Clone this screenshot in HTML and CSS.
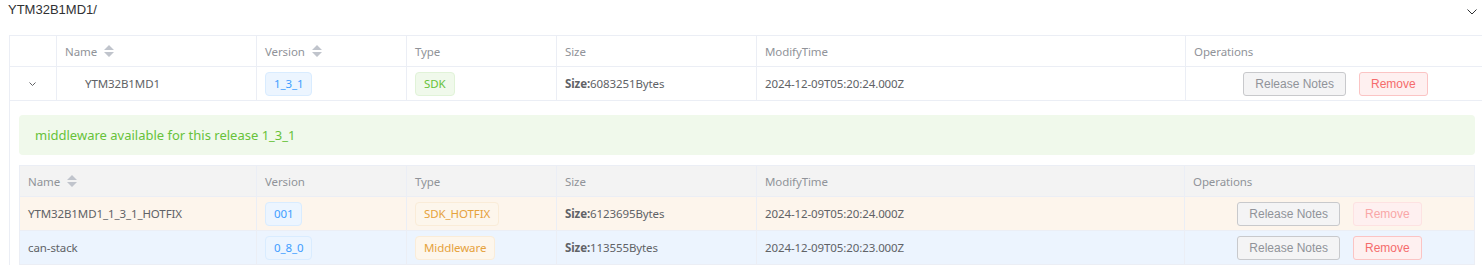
FILE: index.html
```html
<!DOCTYPE html>
<html>
<head>
<meta charset="utf-8">
<link rel="stylesheet" href="styles.css">
</head>
<body>
<div class="page">
  <div class="title-bar">
    <span class="title">YTM32B1MD1/</span>
    <svg class="title-chev" width="10" height="6" viewBox="0 0 10 6"><path d="M0.5 0.5 L5 5 L9.5 0.5" fill="none" stroke="#303133" stroke-width="1"/></svg>
  </div>
  <table class="grid outer">
    <colgroup>
      <col style="width:47px"><col style="width:200px"><col style="width:150px"><col style="width:150px"><col style="width:200px"><col style="width:429px"><col style="width:300px">
    </colgroup>
    <thead>
      <tr>
        <th></th>
        <th><span class="hcell">Name<svg class="sort" width="10" height="12" viewBox="0 0 10 12"><path d="M0 5 L5 0 L10 5 Z M0 7 L5 12 L10 7 Z" fill="#c0c4cc"/></svg></span></th>
        <th><span class="hcell">Version<svg class="sort" width="10" height="12" viewBox="0 0 10 12"><path d="M0 5 L5 0 L10 5 Z M0 7 L5 12 L10 7 Z" fill="#c0c4cc"/></svg></span></th>
        <th>Type</th>
        <th>Size</th>
        <th>ModifyTime</th>
        <th>Operations</th>
      </tr>
    </thead>
    <tbody>
      <tr>
        <td class="expand"><svg width="7" height="5" viewBox="0 0 7 5"><path d="M0.5 0.5 L3.5 3.5 L6.5 0.5" fill="none" stroke="#606266" stroke-width="1"/></svg></td>
        <td class="tree-name">YTM32B1MD1</td>
        <td><span class="tag tag-blue">1_3_1</span></td>
        <td><span class="tag tag-green">SDK</span></td>
        <td><b>Size:</b>6083251Bytes</td>
        <td>2024-12-09T05:20:24.000Z</td>
        <td class="ops"><span class="btn btn-info">Release Notes</span><span class="btn btn-danger">Remove</span></td>
      </tr>
      <tr class="expanded">
        <td colspan="7">
          <div class="alert">middleware available for this release 1_3_1</div>
          <table class="grid inner">
            <colgroup>
              <col style="width:237px"><col style="width:150px"><col style="width:150px"><col style="width:200px"><col style="width:428px"><col style="width:290px">
            </colgroup>
            <thead>
              <tr>
                <th><span class="hcell">Name<svg class="sort" width="10" height="12" viewBox="0 0 10 12"><path d="M0 5 L5 0 L10 5 Z M0 7 L5 12 L10 7 Z" fill="#c0c4cc"/></svg></span></th>
                <th>Version</th>
                <th>Type</th>
                <th>Size</th>
                <th>ModifyTime</th>
                <th>Operations</th>
              </tr>
            </thead>
            <tbody>
              <tr class="row-warn">
                <td>YTM32B1MD1_1_3_1_HOTFIX</td>
                <td><span class="tag tag-blue">001</span></td>
                <td><span class="tag tag-orange">SDK_HOTFIX</span></td>
                <td><b>Size:</b>6123695Bytes</td>
                <td>2024-12-09T05:20:24.000Z</td>
                <td class="ops"><span class="btn btn-info">Release Notes</span><span class="btn btn-danger disabled">Remove</span></td>
              </tr>
              <tr class="row-info">
                <td>can-stack</td>
                <td><span class="tag tag-blue">0_8_0</span></td>
                <td><span class="tag tag-orange">Middleware</span></td>
                <td><b>Size:</b>113555Bytes</td>
                <td>2024-12-09T05:20:23.000Z</td>
                <td class="ops"><span class="btn btn-info">Release Notes</span><span class="btn btn-danger">Remove</span></td>
              </tr>
            </tbody>
          </table>
        </td>
      </tr>
    </tbody>
  </table>
</div>
</body>
</html>
```

FILE: styles.css
```css
html, body {
  margin: 0;
  padding: 0;
  background: #ffffff;
  overflow: hidden;
}
.page {
  width: 1482px;
  height: 266px;
  overflow: hidden;
  font-family: "Noto Sans", "Open Sans", sans-serif;
  font-size: 11.5px;
  letter-spacing: -0.1px;
  color: #606266;
}
.title-bar {
  display: flex;
  align-items: flex-start;
  justify-content: space-between;
  height: 35px;
  padding: 2px 5px 0 8px;
  box-sizing: border-box;
  letter-spacing: 0;
}
.title {
  font-family: "Liberation Sans", Arial, sans-serif;
  font-size: 13px;
  line-height: 16px;
  color: #303133;
}
.title-chev {
  margin-top: 7px;
  flex: none;
}
.grid {
  border-collapse: separate;
  border-spacing: 0;
  table-layout: fixed;
  border-top: 1px solid #ebeef5;
  border-left: 1px solid #ebeef5;
}
.outer {
  width: 1477px;
  margin-left: 9px;
}
.inner {
  width: 1456px;
}
.grid th, .grid td {
  box-sizing: border-box;
  border-right: 1px solid #ebeef5;
  border-bottom: 1px solid #ebeef5;
  padding: 0 8px;
  text-align: left;
  vertical-align: middle;
  white-space: nowrap;
  overflow: hidden;
}
.grid th {
  height: 31px;
  font-weight: normal;
  color: #909399;
}
.grid td {
  height: 34px;
}
.hcell {
  display: inline-flex;
  align-items: center;
}
.sort {
  margin-left: 7px;
}
.expand {
  text-align: center !important;
  padding: 0 !important;
}
.expand svg {
  display: inline-block;
  margin-left: -1px;
  vertical-align: middle;
}
.tree-name {
  padding-left: 28px !important;
}
.tag {
  display: inline-block;
  height: 24px;
  line-height: 22px;
  padding: 0 8px;
  border: 1px solid;
  border-radius: 4px;
  box-sizing: border-box;
  vertical-align: middle;
}
.tag-blue {
  background: #ecf5ff;
  border-color: #d9ecff;
  color: #409eff;
}
.tag-green {
  background: #f0f9eb;
  border-color: #e1f3d8;
  color: #67c23a;
}
.tag-orange {
  background: #fdf6ec;
  border-color: #faecd8;
  color: #e6a23c;
}
.ops {
  text-align: center !important;
}
.btn {
  display: inline-block;
  height: 24px;
  line-height: 22px;
  padding: 0 11px;
  border: 1px solid;
  border-radius: 3px;
  box-sizing: border-box;
  font-family: "Liberation Sans", Arial, sans-serif;
  font-size: 12px;
  letter-spacing: 0;
  vertical-align: middle;
}
.btn + .btn {
  margin-left: 13px;
}
.btn-info {
  background: #f4f4f5;
  border-color: #c8c9cc;
  color: #909399;
}
.btn-danger {
  background: #fef0f0;
  border-color: #fbc4c4;
  color: #f56c6c;
}
.btn-danger.disabled {
  background: #fef0f0;
  border-color: #fde2e2;
  color: #f9a7a7;
}
.expanded > td {
  padding: 14px 10px 0 9px;
  height: auto;
  border-bottom: none;
  vertical-align: top;
}
.alert {
  height: 40px;
  display: flex;
  align-items: center;
  padding: 0 16px;
  margin-bottom: 10px;
  background: #f0f9eb;
  color: #67c23a;
  border-radius: 4px;
  font-size: 13px;
  letter-spacing: 0;
  width: 1456px;
  box-sizing: border-box;
}
.inner th {
  background: #f3f3f3;
}
.row-warn td {
  background: #fdf5ec;
}
.row-info td {
  background: #ecf4fe;
}
.inner td {
  height: 34px;
}
```
